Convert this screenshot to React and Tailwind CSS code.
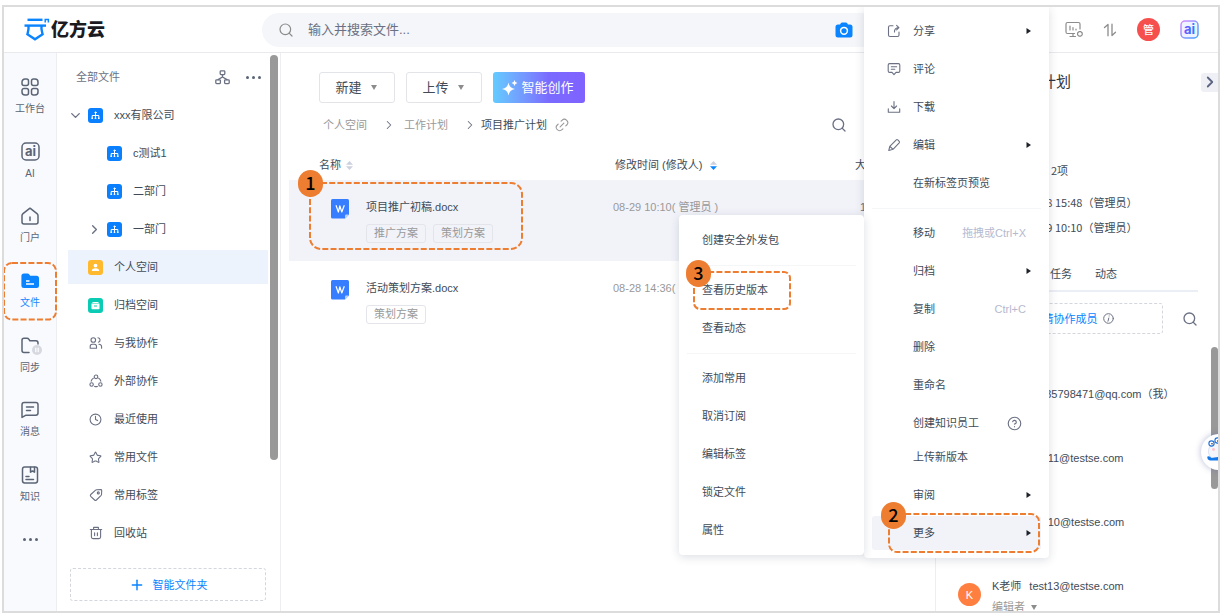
import React, { useState } from "react";
import {
  ChevronDown,
  ChevronRight,
  CircleQuestionMark,
  Clock,
  Link2,
  Plus,
  Search,
  Star,
} from "lucide-react";

// 線アイコンの共通ラッパー
function Svg({ size = 14, box = 14, width = 1.1, className = "", children }) {
  return (
    <svg
      width={size}
      height={size}
      viewBox={`0 0 ${box} ${box}`}
      fill="none"
      stroke="currentColor"
      strokeWidth={width}
      strokeLinecap="round"
      strokeLinejoin="round"
      className={`shrink-0 ${className}`}
      aria-hidden="true"
    >
      {children}
    </svg>
  );
}

function Logo() {
  return (
    <div className="flex items-center gap-px">
      <svg width="26" height="24" viewBox="0 0 26 24" fill="none" aria-hidden="true">
        <g stroke="#0a84ff" strokeWidth="2.4">
          <path d="M3.5 1.8H18.5" />
          <path d="M0.5 7.6H22" />
          <path d="M4.5 7.6C5 11.5 4 14 3.4 16.2L11 21.2L18.6 16.2C18 14 17 11.5 17.5 7.6" />
        </g>
        <path d="M21.2 4.6V1.4H24.4V4.6" stroke="#0a84ff" strokeWidth="1.5" />
      </svg>
      <span className="text-[18px] leading-6 font-black text-[#1b1b1f]">亿方云</span>
    </div>
  );
}

function AiIcon({ colored }) {
  return (
    <svg width="19" height="19" viewBox="0 0 19 19" aria-hidden="true">
      <defs>
        <linearGradient id="aiStroke" x1="0" y1="0" x2="1" y2="1">
          <stop offset="0" stopColor="#d58bff" />
          <stop offset="1" stopColor="#3fa4ff" />
        </linearGradient>
        <linearGradient id="aiText" x1="0" y1="0" x2="1" y2="0">
          <stop offset="0" stopColor="#7a4dff" />
          <stop offset="1" stopColor="#1a86ff" />
        </linearGradient>
      </defs>
      <rect
        x="1"
        y="1"
        width="17"
        height="17"
        rx="4"
        fill={colored ? "#eef3ff" : "none"}
        stroke={colored ? "url(#aiStroke)" : "#5b6475"}
        strokeWidth="1.5"
      />
      <text
        x="9.5"
        y="13.8"
        textAnchor="middle"
        fontSize="13"
        fontWeight="700"
        fontFamily="Inter, sans-serif"
        fill={colored ? "url(#aiText)" : "#5b6475"}
      >
        ai
      </text>
    </svg>
  );
}

const railIcons = {
  work: (
    <Svg size={18} box={18} width={1.5}>
      <path d="M4 1H5.5A2 2 0 0 1 7.5 3V5.5A2 2 0 0 1 5.5 7.5H3A2 2 0 0 1 1 5.5V4A3 3 0 0 1 4 1Z" />
      <path d="M12.5 1H14A3 3 0 0 1 17 4V5.5A2 2 0 0 1 15 7.5H12.5A2 2 0 0 1 10.5 5.5V3A2 2 0 0 1 12.5 1Z" />
      <path d="M3 10.5H5.5A2 2 0 0 1 7.5 12.5V15A2 2 0 0 1 5.5 17H4A3 3 0 0 1 1 14V12.5A2 2 0 0 1 3 10.5Z" />
      <path d="M12.5 10.5H15A2 2 0 0 1 17 12.5V14A3 3 0 0 1 14 17H12.5A2 2 0 0 1 10.5 15V12.5A2 2 0 0 1 12.5 10.5Z" />
    </Svg>
  ),
  ai: <AiIcon />,
  home: (
    <Svg size={18} box={18} width={1.5}>
      <path d="M9 1.2L16 6.6Q17 7.4 17 8.6V15Q17 17 15 17H3Q1 17 1 15V8.6Q1 7.4 2 6.6Z" />
      <path d="M9 10V13.5" />
    </Svg>
  ),
  file: (
    <svg width="18" height="18" viewBox="0 0 18 18" aria-hidden="true">
      <path
        d="M3 1.5H6.5Q7.6 1.5 8.3 2.4L9.2 3.7H15.5Q18 3.7 18 6.2V13.5Q18 16 15.5 16H3Q0.4 16 0.4 13.5V4Q0.4 1.5 3 1.5Z"
        fill="#0a84ff"
      />
      <path d="M5 9H8.5M5 12H13" stroke="white" strokeWidth="1.4" />
    </svg>
  ),
  sync: (
    <svg width="18" height="18" viewBox="0 0 18 18" fill="none" className="overflow-visible" aria-hidden="true">
      <path
        d="M8 15.5H3Q1 15.5 1 13.5V3.2Q1 1.2 3 1.2H6Q7.2 1.2 7.8 2.2L8.8 3.7H15Q17 3.7 17 6V7"
        stroke="#5b6475"
        strokeWidth="1.5"
        strokeLinecap="round"
      />
      <circle cx="16" cy="13" r="5" fill="#d5d8df" />
      <path d="M14.8 10.8V15.2M17.2 10.8V15.2" stroke="white" strokeWidth="1.2" />
    </svg>
  ),
  message: (
    <Svg size={18} box={18} width={1.5}>
      <path d="M3.2 1.5H14.8Q17 1.5 17 3.7V12Q17 14.2 14.8 14.2H5L1 16.4V3.7Q1 1.5 3.2 1.5Z" />
      <path d="M5.5 6H12.5M5.5 9.5H9.5" />
    </Svg>
  ),
  book: (
    <Svg size={18} box={18} width={1.5}>
      <rect x="1.5" y="1" width="15" height="16" rx="2.2" />
      <path d="M9.5 1.2V6.2L11.5 5L13.5 6.2V1.2M5 10.5H8M5 13.5H12.5" />
    </Svg>
  ),
};

const railItems = [
  { icon: "work", label: "工作台" },
  { icon: "ai", label: "AI" },
  { icon: "home", label: "门户" },
  { icon: "file", label: "文件", active: true },
  { icon: "sync", label: "同步" },
  { icon: "message", label: "消息" },
  { icon: "book", label: "知识" },
];

// 組織アイコン（青い四角）
function OrgIcon() {
  return (
    <span className="flex size-[15px] shrink-0 items-center justify-center rounded-[3px] bg-[#0a80ff] text-white">
      <Svg size={9} box={9} width={1}>
        <path d="M4.5 2V7M1.2 7V4.5H7.8V7" />
        <circle cx="4.5" cy="1.5" r="0.6" fill="currentColor" />
        <path d="M1 7.3H1.4M4.3 7.3H4.7M7.6 7.3H8" strokeWidth="1.5" />
      </Svg>
    </span>
  );
}

const folderIcons = {
  person: (
    <span className="flex size-[15px] items-center justify-center rounded-[3px] bg-[#ffb92e]">
      <svg width="9" height="9" viewBox="0 0 9 9" fill="white" aria-hidden="true">
        <circle cx="4.5" cy="2.6" r="1.9" />
        <path d="M0.8 8Q0.8 5.3 4.5 5.3Q8.2 5.3 8.2 8Z" />
      </svg>
    </span>
  ),
  archive: (
    <span className="flex size-[15px] items-center justify-center rounded-[3px] bg-[#0accb4]">
      <svg width="9" height="9" viewBox="0 0 9 9" aria-hidden="true">
        <path d="M1.5 1H7.5V2H1.5ZM0.5 2.6H8.5V7.4Q8.5 8.2 7.7 8.2H1.3Q0.5 8.2 0.5 7.4Z" fill="white" />
        <path d="M3 5H6" stroke="#0accb4" />
      </svg>
    </span>
  ),
  team: (
    <Svg>
      <circle cx="4.3" cy="4" r="2.3" />
      <path d="M1.2 12.3V10.5Q1.2 8.3 3.2 8.3H5.5Q7.5 8.3 7.5 10.5V12.3Z" />
      <path d="M9 1.7A2.3 2.3 0 0 1 9.4 6.2M10 8.3Q12.6 8.5 12.6 10.8V12.3" />
    </Svg>
  ),
  outer: (
    <Svg>
      <circle cx="7" cy="2.8" r="1.8" />
      <circle cx="2.6" cy="10.5" r="1.7" />
      <circle cx="11.4" cy="10.5" r="1.7" />
      <path d="M4.3 4.2Q2.6 5.2 2.2 7.2M9.7 4.2Q11.4 5.2 11.8 7.2M5.6 12.4Q7 12.9 8.4 12.4" />
    </Svg>
  ),
  clock: <Clock size={13} strokeWidth={2} />,
  star: <Star size={13} strokeWidth={2} />,
  tag: (
    <Svg>
      <path d="M7.6 1.8L11.8 1.6Q12.7 1.6 12.7 2.5L12.5 6.5Q12.4 7.2 11.9 7.7L7.4 12Q6.5 12.8 5.6 12L1.7 8.3Q0.9 7.4 1.8 6.5L6.3 2.4Q6.9 1.9 7.6 1.8Z" />
      <circle cx="9.3" cy="4.9" r="1" />
    </Svg>
  ),
  trash: (
    <Svg>
      <path d="M1.3 3.5H12.7M4.6 3.3V1.4H9.4V3.3M2.4 3.7V11Q2.4 12.6 4 12.6H10Q11.6 12.6 11.6 11V3.7M5.6 6.8V9.6M8.4 6.8V9.6" />
    </Svg>
  ),
};

const folders = [
  { icon: "person", label: "个人空间", active: true },
  { icon: "archive", label: "归档空间" },
  { icon: "team", label: "与我协作" },
  { icon: "outer", label: "外部协作" },
  { icon: "clock", label: "最近使用" },
  { icon: "star", label: "常用文件" },
  { icon: "tag", label: "常用标签" },
  { icon: "trash", label: "回收站" },
];

const departments = [
  { label: "c测试1" },
  { label: "二部门" },
  { label: "一部门", closed: true },
];

// 手順の番号付き点線枠
function Callout({ number, radius = 8, badge = "-top-3 -left-2", className }) {
  return (
    <span className={`pointer-events-none absolute z-10 ${className}`}>
      <svg className="size-full overflow-visible" fill="none" aria-hidden="true">
        <rect
          width="100%"
          height="100%"
          rx={radius}
          stroke="#ed7d31"
          strokeWidth="2"
          strokeDasharray="6 2.2"
        />
      </svg>
      {number && (
        <span
          className={`absolute flex h-[27px] w-[25px] items-center justify-center rounded-full bg-[#ed7d31] pb-[3px] font-['Noto_Sans_CJK_SC',sans-serif] text-[18px] leading-none font-medium text-black ${badge}`}
        >
          {number}
        </span>
      )}
    </span>
  );
}

function Header() {
  const [keyword, setKeyword] = useState("");

  return (
    <header className="flex h-[46px] shrink-0 items-center border-b border-[#e9eaee] pr-[19px] pl-5">
      <div className="w-[238px] shrink-0">
        <Logo />
      </div>
      <label className="mr-[186px] flex h-[34px] min-w-0 flex-1 items-center rounded-full bg-[#f4f6f9] pr-[26px] pl-4">
        <Search size={16} strokeWidth={1.8} className="shrink-0 text-[#8b8b8b]" />
        <input
          type="text"
          aria-label="搜索文件"
          placeholder="输入并搜索文件..."
          value={keyword}
          onChange={(e) => setKeyword(e.target.value)}
          className="ml-[14px] min-w-0 flex-1 bg-transparent text-[13px] outline-none placeholder:text-[#6b7183]"
        />
        <svg width="18" height="16" viewBox="0 0 18 16" aria-hidden="true">
          <path
            d="M3 2.5H5L6 1Q6.4 0.5 7 0.5H11Q11.6 0.5 12 1L13 2.5H15Q17.5 2.5 17.5 5V13Q17.5 15.5 15 15.5H3Q0.5 15.5 0.5 13V5Q0.5 2.5 3 2.5Z"
            fill="#0a84ff"
          />
          <circle cx="9" cy="8.8" r="3.4" fill="none" stroke="white" strokeWidth="1.5" />
        </svg>
      </label>
      <div className="flex shrink-0 items-center gap-5 text-[#8c8c8c]">
        <button type="button" aria-label="设备">
          <Svg size={18} box={18} width={1.2}>
            <path d="M9.5 12.5H2.5Q1 12.5 1 11V3Q1 1.5 2.5 1.5H13.5Q15 1.5 15 3V8M8 12.5V15.5M5 15.5H10.5M5 5V9M8 6.5V9M11 8V9" />
            <path d="M12.6 12L14 10.6H15.8L17.2 12V13.8L15.8 15.2H14L12.6 13.8Z" />
          </Svg>
        </button>
        <button type="button" aria-label="传输列表">
          <Svg size={14} width={1.3}>
            <path d="M1.5 4.5L5 1.5V12.8M9 1.2V12.5L12.5 9.3" />
          </Svg>
        </button>
        <button
          type="button"
          className="flex size-[23px] items-center justify-center rounded-full bg-[#f5504e] text-[11px] font-medium text-white"
        >
          管
        </button>
        <button type="button" aria-label="AI 助手">
          <AiIcon colored />
        </button>
      </div>
    </header>
  );
}

function Rail() {
  return (
    <nav className="flex w-[53px] shrink-0 flex-col border-r border-[#eceef2] bg-[#f8fafd] pt-3 pb-[50px]">
      {railItems.map((item) => (
        <a
          key={item.label}
          href="#"
          className={`relative flex flex-1 flex-col items-center justify-center gap-1.5 text-[10px] leading-[14px] ${
            item.active ? "text-[#1a86ff]" : "text-[#5b6475]"
          }`}
        >
          {railIcons[item.icon]}
          {item.label}
          {item.active && <Callout className="inset-x-0 top-1 bottom-1" />}
        </a>
      ))}
      <button
        type="button"
        aria-label="更多应用"
        className="flex h-11 shrink-0 items-center justify-center gap-[3px]"
      >
        <span className="size-[3px] rounded-full bg-[#5b6475]" />
        <span className="size-[3px] rounded-full bg-[#5b6475]" />
        <span className="size-[3px] rounded-full bg-[#5b6475]" />
      </button>
    </nav>
  );
}

function Sidebar() {
  return (
    <aside className="relative flex w-[224px] shrink-0 flex-col border-r border-[#eceef2] pr-3 pl-[11px] text-[#414b57]">
      <div className="mb-px flex h-11 shrink-0 items-center pt-1 pl-2 text-[#6b7183]">
        <span className="flex-1">全部文件</span>
        <button type="button" aria-label="组织架构" className="mr-4">
          <Svg size={15} box={15} width={1.3}>
            <rect x="5.2" y="0.8" width="4.6" height="3.8" rx="0.8" />
            <rect x="0.8" y="9.8" width="4.6" height="3.8" rx="0.8" />
            <rect x="9.6" y="9.8" width="4.6" height="3.8" rx="0.8" />
            <path d="M7.5 4.8V7L3 9.6M7.5 7L12 9.6" />
          </Svg>
        </button>
        <button type="button" aria-label="更多" className="mr-[7px] flex gap-[3px]">
          <span className="size-[3px] rounded-full bg-[#5b6475]" />
          <span className="size-[3px] rounded-full bg-[#5b6475]" />
          <span className="size-[3px] rounded-full bg-[#5b6475]" />
        </button>
      </div>

      {/* 部門ツリー */}
      <ul className="flex flex-col gap-1">
        <li>
          <a href="#" className="flex h-[34px] items-center">
            <ChevronDown size={15} strokeWidth={2.2} className="mr-[5px] text-[#6b7183]" />
            <OrgIcon />
            <span className="ml-[11px]">xxx有限公司</span>
          </a>
        </li>
        {departments.map((item) => (
          <li key={item.label}>
            <a href="#" className="flex h-[34px] items-center pl-[19px]">
              <span className="mr-[5px] w-[15px]">
                {item.closed && <ChevronRight size={15} strokeWidth={2.2} className="text-[#6b7183]" />}
              </span>
              <OrgIcon />
              <span className="ml-[11px]">{item.label}</span>
            </a>
          </li>
        ))}
        {folders.map((item) => (
          <li key={item.label}>
            <a
              href="#"
              className={`flex h-[34px] items-center pl-5 ${item.active ? "bg-[#ecf3fd]" : ""}`}
            >
              <span className="flex w-[15px] justify-center text-[#6b7183]">
                {folderIcons[item.icon]}
              </span>
              <span className="ml-[11px]">{item.label}</span>
            </a>
          </li>
        ))}
      </ul>

      <button
        type="button"
        className="mx-0.5 mt-[18px] flex h-[33px] shrink-0 items-center justify-center gap-2 rounded-[3px] border border-dashed border-[#d3d6dc] text-[#0a84ff]"
      >
        <Plus size={16} strokeWidth={2.2} />
        智能文件夹
      </button>

      {/* スクロールバー */}
      <div className="absolute top-0.5 right-0.5 h-[405px] w-2 rounded-full bg-[#999999]" />
    </aside>
  );
}

function WordIcon() {
  return (
    <svg width="18" height="20" viewBox="0 0 18 20" className="shrink-0" aria-hidden="true">
      <path d="M1.5 0H16.5Q18 0 18 1.5V15.5L14 19.5H1.5Q0 19.5 0 18V1.5Q0 0 1.5 0Z" fill="#377dff" />
      <path d="M18 15.5L14 19.5V16.8Q14 15.5 15.3 15.5Z" fill="#b9d2ff" />
      <path
        d="M5 6.3L7.4 13L8.8 6.8L10.8 13L13.3 6.3"
        fill="none"
        stroke="white"
        strokeWidth="1.2"
        strokeLinejoin="round"
      />
    </svg>
  );
}

function Sorter({ down }) {
  return (
    <svg width="7" height="9" viewBox="0 0 7 9" aria-hidden="true">
      <path d="M0 3.7L3.5 0L7 3.7Z" fill="#cdd0de" />
      <path d="M0 5.3L3.5 9L7 5.3Z" fill={down ? "#0a84ff" : "#cdd0de"} />
    </svg>
  );
}

function Caret() {
  return (
    <svg width="6" height="5" viewBox="0 0 6 5" aria-hidden="true">
      <path d="M0 0H6L3 5Z" fill="#8c8c8c" />
    </svg>
  );
}

const files = [
  {
    name: "项目推广初稿.docx",
    tags: ["推广方案", "策划方案"],
    time: "08-29 10:10( 管理员 )",
    size: "11.5KB",
    selected: true,
  },
  {
    name: "活动策划方案.docx",
    tags: ["策划方案"],
    time: "08-28 14:36( 管理员 )",
    size: "10.2KB",
  },
];

function FileList() {
  return (
    <main className="min-w-0 flex-1 pt-[19px] text-[#414b57]">
      <div className="flex gap-[11px] pl-[38px] text-[13px]">
        <button
          type="button"
          className="flex h-[31px] w-[76px] items-center justify-center gap-[9px] rounded-[3px] border border-[#e2e4e8] pr-0.5"
        >
          新建 <Caret />
        </button>
        <button
          type="button"
          className="flex h-[31px] w-[76px] items-center justify-center gap-[9px] rounded-[3px] border border-[#e2e4e8] pr-0.5"
        >
          上传 <Caret />
        </button>
        <button
          type="button"
          className="flex h-[31px] w-[92px] items-center justify-center gap-[3px] rounded-[3px] bg-linear-to-r from-[#62cbff] via-[#7a6bff] via-60% to-[#8062ff] pr-0.5 text-white"
        >
          <svg width="16" height="16" viewBox="0 0 16 16" fill="white" aria-hidden="true">
            <path d="M6.5 2.5Q7.4 8.1 13 9Q7.4 9.9 6.5 15.5Q5.6 9.9 0 9Q5.6 8.1 6.5 2.5Z" />
            <path d="M12.5 0Q12.9 2.6 15.5 3Q12.9 3.4 12.5 6Q12.1 3.4 9.5 3Q12.1 2.6 12.5 0Z" />
          </svg>
          智能创作
        </button>
      </div>

      <div className="mb-[3px] flex h-11 items-center pr-[88px] pl-[42px]">
        <nav aria-label="面包屑" className="flex flex-1 items-center text-[#999999]">
          <a href="#">个人空间</a>
          <ChevronRight size={14} strokeWidth={1.8} className="mr-2 ml-[15px] text-[#6b7183]" />
          <a href="#">工作计划</a>
          <ChevronRight size={14} strokeWidth={1.8} className="mr-1 ml-[15px] text-[#6b7183]" />
          <span className="text-[#414b57]">项目推广计划</span>
          <Link2 size={16} strokeWidth={1.6} className="ml-[7px] -rotate-45" />
        </nav>
        <button type="button" aria-label="搜索">
          <Search size={16} strokeWidth={2} className="text-[#6b7183]" />
        </button>
      </div>

      <div className="pl-2">
        <table className="w-full table-fixed border-collapse text-left">
          <thead>
            <tr className="h-[30px]">
              <th className="w-[324px] pl-[30px] font-normal">
                <span className="flex items-center gap-[5px]">
                  名称 <Sorter />
                </span>
              </th>
              <th className="w-[242px] pl-0.5 font-normal">
                <span className="flex items-center gap-2">
                  修改时间 (修改人) <Sorter down />
                </span>
              </th>
              <th className="font-normal">大小</th>
            </tr>
          </thead>
          <tbody>
            {files.map((file) => (
              <tr
                key={file.name}
                className={`h-[81px] align-top ${file.selected ? "bg-[#f2f3f9]" : ""}`}
              >
                <td className="relative pt-[19px] pl-[42px]">
                  <div className="flex gap-[17px]">
                    <WordIcon />
                    <div>
                      <a href="#">{file.name}</a>
                      <div className="mt-[9px] flex gap-[7px] text-[#999999]">
                        {file.tags.map((tag) => (
                          <span
                            key={tag}
                            className="rounded-[3px] border border-[#e4e5ea] px-[7px] leading-[17px]"
                          >
                            {tag}
                          </span>
                        ))}
                      </div>
                    </div>
                  </div>
                  {file.selected && (
                    <Callout
                      number="1"
                      radius={11}
                      badge="-top-[13px] -left-3"
                      className="top-[3px] left-[21px] h-[66px] w-[212px]"
                    />
                  )}
                </td>
                <td className="pt-[19px] text-[#999999]">{file.time}</td>
                <td className="pt-[19px] pl-[5px] text-[#6b7183]">{file.size}</td>
              </tr>
            ))}
          </tbody>
        </table>
      </div>
    </main>
  );
}

const members = [
  { initial: "管", name: "管理员", mail: "2135798471@qq.com（我）", role: "所有者", color: "bg-[#f5504e]" },
  { initial: "D", name: "D老师", mail: "test11@testse.com", role: "编辑者", color: "bg-[#4d9bff]" },
  { initial: "D", name: "D老师", mail: "test10@testse.com", role: "编辑者", color: "bg-[#4d9bff]" },
  { initial: "K", name: "K老师", mail: "test13@testse.com", role: "编辑者", color: "bg-[#ff7f40]" },
];

function DetailPanel() {
  return (
    <aside className="relative flex w-[283px] shrink-0 flex-col border-l border-[#eceef2] text-[#414b57]">
      <div className="mt-[15px] flex h-7 shrink-0 items-center pl-[45px]">
        <h2 className="flex-1 text-[15px] text-[#2f3742]">项目推广计划</h2>
        <button
          type="button"
          aria-label="收起"
          className="flex h-[19px] w-[17px] items-center justify-center rounded-l-[3px] bg-[#eff0f6]"
        >
          <ChevronRight size={18} strokeWidth={2.4} className="shrink-0 text-[#5b6480]" />
        </button>
      </div>

      <dl className="mt-[66px] grid shrink-0 grid-cols-[38px_1fr] pl-[22px] font-['Noto_Sans_CJK_SC',sans-serif]">
        <dt className="h-8">大小</dt>
        <dd>文件共计：2项</dd>
        <dt className="h-[25px]">创建</dt>
        <dd>2024-08-28 15:48（管理员）</dd>
        <dt className="h-4">更新</dt>
        <dd>2024-08-29 10:10（管理员）</dd>
      </dl>

      <div className="mt-[22px] mr-5 ml-4 flex h-[35px] shrink-0 items-center gap-[23px] border-b-2 border-[#eceef6] pl-2">
        <button type="button" className="text-[#0a84ff]">协作</button>
        <button type="button">评论</button>
        <button type="button">任务</button>
        <button type="button">动态</button>
      </div>

      <div className="mt-[11px] mr-5 ml-4 flex shrink-0 items-center">
        <button
          type="button"
          className="flex h-[31px] flex-1 items-center justify-center gap-[5px] rounded-[3px] border border-dashed border-[#d3d6dc] pl-3 text-[#0a84ff]"
        >
          <Plus size={13} strokeWidth={2.2} />
          邀请协作成员
          <Svg size={11} box={11} width={1} className="text-[#6b7183]">
            <circle cx="5.5" cy="5.5" r="4.8" />
            <path d="M5.8 5L5 8.2M6.1 3H6.2" />
          </Svg>
        </button>
        <button type="button" aria-label="搜索成员" className="ml-[19px]">
          <Search size={16} strokeWidth={2} className="text-[#6b7183]" />
        </button>
      </div>

      <ul className="mt-[52px] min-h-0 flex-1 overflow-hidden">
        {members.map((member) => (
          <li key={member.mail} className="flex h-16 gap-[11px] pl-[22px]">
            <span
              className={`mt-[5px] flex size-[23px] shrink-0 items-center justify-center rounded-full text-white ${member.color}`}
            >
              {member.initial}
            </span>
            <div className="whitespace-nowrap">
              <div>
                <span className="mr-2">{member.name}</span>
                {member.mail}
              </div>
              <div className="mt-[5px] flex items-center gap-[6px] text-[#999999]">
                {member.role} <Caret />
              </div>
            </div>
          </li>
        ))}
      </ul>

      {/* スクロールバー */}
      <div className="absolute top-[294px] right-0 h-[142px] w-[7px] rounded-full bg-[#999999]" />
      {/* マスコット */}
      <button
        type="button"
        aria-label="在线助手"
        className="absolute top-[381px] -right-[19px] size-9 rounded-full bg-white shadow-[0_0_6px_rgba(90,100,160,0.45)]"
      >
        <svg width="36" height="36" viewBox="0 0 36 36" fill="none" aria-hidden="true">
          <path d="M8 14Q6 21 11 24H25V8Q12 5 8 14Z" fill="#f4f6fb" stroke="#d7dcec" strokeWidth="0.8" />
          <circle cx="10.5" cy="9.5" r="2.6" fill="white" stroke="#1f6fd6" strokeWidth="1.1" />
          <circle cx="16.5" cy="6.5" r="2.6" fill="white" stroke="#1f6fd6" strokeWidth="1.1" />
          <circle cx="11" cy="9.8" r="0.8" fill="#23324d" />
          <circle cx="16.8" cy="7" r="0.8" fill="#23324d" />
          <circle cx="12.5" cy="15.5" r="1.4" fill="#ffc4cc" />
          <path d="M6.5 22.5Q8.5 21.5 10.5 24L20 22.5V26.5H9Q5.5 25.5 6.5 22.5Z" fill="#1479ea" />
        </svg>
      </button>
    </aside>
  );
}

const menuIcons = {
  share: (
    <Svg>
      <path d="M6 1.8H3Q1.5 1.8 1.5 3.3V11Q1.5 12.5 3 12.5H10.5Q12 12.5 12 11V8M7.5 8Q7.2 3.8 11.8 3.6M9.6 1.4L11.9 3.6L9.6 5.8" />
    </Svg>
  ),
  comment: (
    <Svg>
      <path d="M2.6 1.6H11.4Q12.8 1.6 12.8 3V9Q12.8 10.4 11.4 10.4H9L7 12.6L5 10.4H2.6Q1.2 10.4 1.2 9V3Q1.2 1.6 2.6 1.6ZM4.3 4.7H9.7M4.3 7.3H7.8" />
    </Svg>
  ),
  download: (
    <Svg>
      <path d="M7 1.5V8.3M4.4 6L7 8.6L9.6 6M1.3 8.8V12.2H12.7V8.8" />
    </Svg>
  ),
  edit: (
    <Svg>
      <path d="M9.3 1.8Q10 1.2 10.8 1.9L12.2 3.3Q12.8 4 12.2 4.8L6 11.3L1.8 12.5L2.8 8.3ZM3 8.5L5.8 11.1" />
    </Svg>
  ),
};

const arrow = (
  <svg width="5" height="6" viewBox="0 0 5 6" className="mr-[10px]" aria-hidden="true">
    <path d="M0.5 0L5 3L0.5 6Z" fill="#1d2329" />
  </svg>
);

function MenuItem({ icon, label, shortcut, sub, active, children }) {
  return (
    <button
      type="button"
      className={`relative flex h-[34px] w-full items-center rounded-[3px] text-left ${
        active ? "bg-[#f2f3f9]" : ""
      }`}
    >
      <span className="mr-3 flex w-[29px] justify-end text-[#6b7183]">{icon && menuIcons[icon]}</span>
      <span className="flex-1">{label}</span>
      {shortcut && <span className="mr-[15px] text-[#b5b9cf]">{shortcut}</span>}
      {sub && arrow}
      {children}
    </button>
  );
}

function SubMenuItem({ label, children }) {
  return (
    <button type="button" className="relative flex h-[34px] w-full items-center pl-[15px] text-left">
      {label}
      {children}
    </button>
  );
}

function ContextMenu() {
  return (
    <div className="absolute top-0 right-[169px] z-20 w-[185px] text-[#414b57]">
      <div className="flex flex-col gap-1 rounded-b-[4px] bg-white px-2 pt-[7px] pb-2 shadow-[0_2px_10px_rgba(40,50,80,0.16)]">
        <MenuItem icon="share" label="分享" sub />
        <MenuItem icon="comment" label="评论" />
        <MenuItem icon="download" label="下载" />
        <MenuItem icon="edit" label="编辑" sub />
        <MenuItem label="在新标签页预览" />
        <hr className="mt-1 mb-[3px] border-[#f5f6f8]" />
        <MenuItem label="移动" shortcut="拖拽或Ctrl+X" />
        <MenuItem label="归档" sub />
        <MenuItem label="复制" shortcut="Ctrl+C" />
        <MenuItem label="删除" />
        <MenuItem label="重命名" />
        <div>
          <MenuItem label="创建知识员工">
            <CircleQuestionMark size={15} strokeWidth={1.8} className="mr-[19px] text-[#6b7183]" />
          </MenuItem>
          <MenuItem label="上传新版本" />
        </div>
        <MenuItem label="审阅" sub />
        <MenuItem label="更多" sub active>
          <Callout number="2" className="-inset-y-0.5 right-[2px] left-[17px]" />
        </MenuItem>
      </div>

      {/* 「更多」のサブメニュー */}
      <div className="absolute top-[208px] right-full flex w-[185px] flex-col gap-1 rounded-[4px] bg-white p-2 shadow-[0_2px_10px_rgba(40,50,80,0.16)]">
        <SubMenuItem label="创建安全外发包" />
        <hr className="mt-1 mb-[3px] border-[#f5f6f8]" />
        <SubMenuItem label="查看历史版本">
          <Callout number="3" radius={6} className="-top-px left-[7px] h-[37px] w-24" />
        </SubMenuItem>
        <SubMenuItem label="查看动态" />
        <hr className="mt-1 mb-[3px] border-[#f5f6f8]" />
        <SubMenuItem label="添加常用" />
        <SubMenuItem label="取消订阅" />
        <SubMenuItem label="编辑标签" />
        <SubMenuItem label="锁定文件" />
        <SubMenuItem label="属性" />
      </div>
    </div>
  );
}

export default function App() {
  return (
    <div className="h-screen bg-white pt-[5px] pr-[5px] pb-[3px] pl-0.5 font-['Liberation_Sans','Noto_Sans_CJK_SC',sans-serif] text-[11px] leading-4">
      <div className="relative flex h-full flex-col overflow-hidden border-2 border-[#dcdcdc]">
        <Header />
        <div className="flex min-h-0 flex-1">
          <Rail />
          <Sidebar />
          <FileList />
          <DetailPanel />
        </div>
        <ContextMenu />
      </div>
    </div>
  );
}
